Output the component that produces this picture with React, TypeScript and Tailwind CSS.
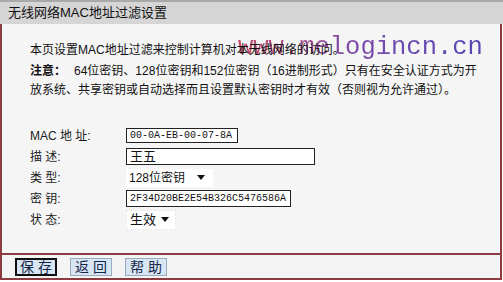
import React from 'react'

const CJK = '"Liberation Sans", "Noto Sans CJK SC", sans-serif'

function Arrow() {
  return (
    <svg width="8" height="5" viewBox="0 0 8 5" className="shrink-0">
      <path d="M0 0 L8 0 L4 5 Z" fill="#111" />
    </svg>
  )
}

function Row({ label, children }: { label: string; children: React.ReactNode }) {
  return (
    <div className="flex h-[21px] items-center">
      <div className="w-[96px] whitespace-pre text-[12px] text-[#1c1c1c]">{label}</div>
      {children}
    </div>
  )
}

export default function App() {
  return (
    <div className="w-[503px] h-[282px] bg-white text-[12px] text-[#111]" style={{ fontFamily: CJK }}>
      {/* title bar */}
      <div className="h-[24px] bg-[#d5d5d5] border-t-2 border-[#a9a9a9] flex items-center pl-[8px] text-[13px] text-[#111]">
        无线网络MAC地址过滤设置
      </div>

      {/* main panel */}
      <div className="relative w-[502px] h-[229px] bg-[#f5f5f5] border-x-2 border-[#8c3c40] pl-[28px] pt-[17px]">
        {/* watermark sits behind the first line */}
        <div
          className="absolute left-[236px] top-[11px] leading-none text-[25.5px] bg-gradient-to-r from-[#c44866] via-[#7a4aac] to-[#5247b4] bg-clip-text text-transparent"
          style={{ fontFamily: '"Liberation Mono", monospace' }}
        >
          www.melogincn.cn
        </div>
        <div className="relative h-[19px] leading-[19px]">本页设置MAC地址过滤来控制计算机对本无线网络的访问。</div>
        <div className="relative mt-[2px] h-[19px] leading-[19px] whitespace-nowrap">
          <span className="font-bold">注意：</span>
          <span className="ml-[8px]">64位密钥、128位密钥和152位密钥（16进制形式）只有在安全认证方式为开</span>
        </div>
        <div className="relative h-[19px] leading-[19px]">放系统、共享密钥或自动选择而且设置默认密钥时才有效（否则视为允许通过）。</div>

        <div className="mt-[25px] flex flex-col">
          <Row label="MAC 地 址:">
            <div
              className="w-[112px] h-[15px] border border-[#222] bg-white pl-[3px] text-[10px] leading-[13px] whitespace-nowrap overflow-hidden"
              style={{ fontFamily: '"Liberation Mono", monospace' }}
            >
              00-0A-EB-00-07-8A
            </div>
          </Row>
          <Row label="描 述:">
            <div className="w-[189px] h-[17px] border border-[#222] bg-white pl-[3px] text-[13px] leading-[15px]">王五</div>
          </Row>
          <Row label="类 型:">
            <div className="w-[87px] h-[18px] bg-white flex items-center justify-between pl-[3px] pr-[8px] text-[12px]">
              <span>128位密钥</span>
              <Arrow />
            </div>
          </Row>
          <Row label="密 钥:">
            <div
              className="w-[165px] h-[17px] border border-[#222] bg-white pl-[3px] text-[10px] leading-[15px] whitespace-nowrap overflow-hidden"
              style={{ fontFamily: '"Liberation Mono", monospace' }}
            >
              2F34D20BE2E54B326C5476586A
            </div>
          </Row>
          <Row label="状 态:">
            <div className="w-[50px] h-[20px] bg-white border border-dotted border-[#e2e2e2] flex items-center justify-between pl-[3px] pr-[6px] text-[13px]">
              <span>生效</span>
              <Arrow />
            </div>
          </Row>
        </div>
      </div>

      {/* buttons */}
      <div className="w-[502px] h-[27px] bg-[#f4f4f4] border-x-2 border-y-2 border-[#8c3c40] flex items-center pl-[13px] gap-[13px]">
        <button className="w-[42px] h-[18px] bg-[#d8e6f3] border-2 border-[#111] text-[14px] leading-none text-[#15264a] whitespace-pre">保 存</button>
        <button className="w-[42px] h-[18px] bg-[#d8e6f3] border border-[#9aaabd] text-[14px] leading-none text-[#15264a] whitespace-pre">返 回</button>
        <button className="w-[42px] h-[18px] bg-[#d8e6f3] border border-[#9aaabd] text-[14px] leading-none text-[#15264a] whitespace-pre">帮 助</button>
      </div>
    </div>
  )
}
